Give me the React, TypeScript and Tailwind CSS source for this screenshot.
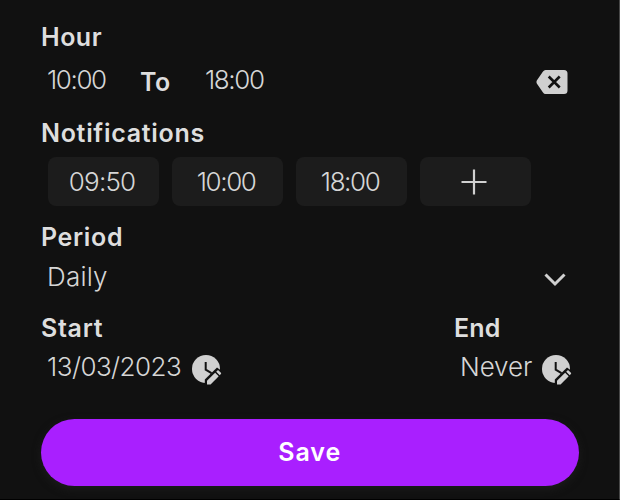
import React from "react";

const ClockEdit = ({ className = "" }: { className?: string }) => (
  <svg viewBox="0 0 30 30" className={"h-[30px] w-[30px] shrink-0 " + className}>
    <circle cx="14" cy="14" r="14" fill="#d0d0d0" />
    <path d="M13.7 7v7.6l5.8 3.6" fill="none" stroke="#111" strokeWidth="2" />
    <path d="M12.8 30v-5.6L25 12.5l6 4.5-13 13z" fill="#111" />
    <path d="M15 29.5v-3.7l8.1-8.1 3.6 3.6-8.1 8.2z" fill="#d0d0d0" />
    <path d="M24.2 16.7l1.2-1.2q.6-.6 1.2 0l2.3 2.3q.6.6 0 1.2l-1.2 1.2z" fill="#d0d0d0" />
  </svg>
);

const Heading = ({ children, className = "" }: { children: React.ReactNode; className?: string }) => (
  <h2 className={"h-9 text-[25px] leading-9 font-semibold text-[#dedede] whitespace-nowrap " + className}>{children}</h2>
);

const Value = ({ children, className = "" }: { children: React.ReactNode; className?: string }) => (
  <span className={"text-[26px] leading-9 font-[260] text-[#d6d6d6] whitespace-nowrap " + className}>{children}</span>
);

const Chip = ({ children }: { children: React.ReactNode }) => (
  <button className="flex h-[49px] w-[111px] items-center justify-center rounded-lg bg-[#1c1c1c] pr-[2px]">{children}</button>
);

export default function App() {
  return (
    <main className="flex h-[500px] w-[620px] flex-col overflow-hidden border-r border-b border-r-[#484848] border-b-black bg-[#111] pt-[19px] pr-[40px] pl-[41px] font-['Inter',sans-serif]">
      <section className="h-[96px]">
        <Heading className="tracking-[0.5px]">Hour</Heading>
        <div className="flex h-[50px] items-center pl-[6px]">
          <Value className="w-[93px] tracking-[-1.4px]">10:00</Value>
          <Heading className="mt-[3px] w-[65px] tracking-[0.5px]">To</Heading>
          <Value className="tracking-[-1.4px]">18:00</Value>
          <svg viewBox="0 0 32 26" className="mt-[4px] mr-[11px] ml-auto h-[26px] w-8">
            <path d="M9.5 1H28q3.5 0 3.5 3.5v17Q31.5 25 28 25H9.5Q8 25 7 23.5L.8 14.5Q0 13 .8 11.5L7 2.5Q8 1 9.5 1z" fill="#d0d0d0" />
            <path d="M12.7 7.5l11 11M23.7 7.5l-11 11" stroke="#111" strokeWidth="2.6" />
          </svg>
        </div>
      </section>
      <section className="h-[104px]">
        <Heading className="tracking-[0.7px]">Notifications</Heading>
        <div className="mt-[6px] flex gap-[13px] pl-[6.6px]">
          <Chip><Value className="tracking-[-0.8px]">09:50</Value></Chip>
          <Chip><Value className="tracking-[-1.4px]">10:00</Value></Chip>
          <Chip><Value className="tracking-[-1.4px]">18:00</Value></Chip>
          <Chip>
            <svg viewBox="0 0 26 26" className="h-[26px] w-[26px]"><path d="M13 .5v25M.5 13h25" stroke="#d0d0d0" strokeWidth="2.2" /></svg>
          </Chip>
        </div>
      </section>
      <section className="h-[91px]">
        <Heading className="tracking-[0.65px]">Period</Heading>
        <div className="flex h-[44px] items-center justify-between pr-[13px] pl-[6px]">
          <Value className="tracking-[0.2px]">Daily</Value>
          <svg viewBox="0 0 22 14" className="mt-[6px] h-[14px] w-[22px]"><path d="M1.5 1.5L11 11l9.5-9.5" fill="none" stroke="#d0d0d0" strokeWidth="3" /></svg>
        </div>
      </section>
      <section className="flex h-[109px] justify-between">
        <div>
          <Heading className="tracking-[0.7px]">Start</Heading>
          <div className="flex h-[42px] items-center pl-[6px]">
            <Value className="w-[145px] tracking-[-0.55px]">13/03/2023</Value>
            <ClockEdit className="mt-[6px]" />
          </div>
        </div>
        <div className="w-[125px]">
          <Heading className="tracking-[0.2px]">End</Heading>
          <div className="flex h-[42px] items-center pl-[6px]">
            <Value className="w-[81.5px] tracking-[-0.1px]">Never</Value>
            <ClockEdit className="mt-[6px]" />
          </div>
        </div>
      </section>
      <button className="h-[67px] w-[537.5px] rounded-full bg-[#a91fff] pt-px text-[25px] font-semibold tracking-[0.9px] text-white shadow-[0_3px_8px_#1c1c1c]">Save</button>
    </main>
  );
}
